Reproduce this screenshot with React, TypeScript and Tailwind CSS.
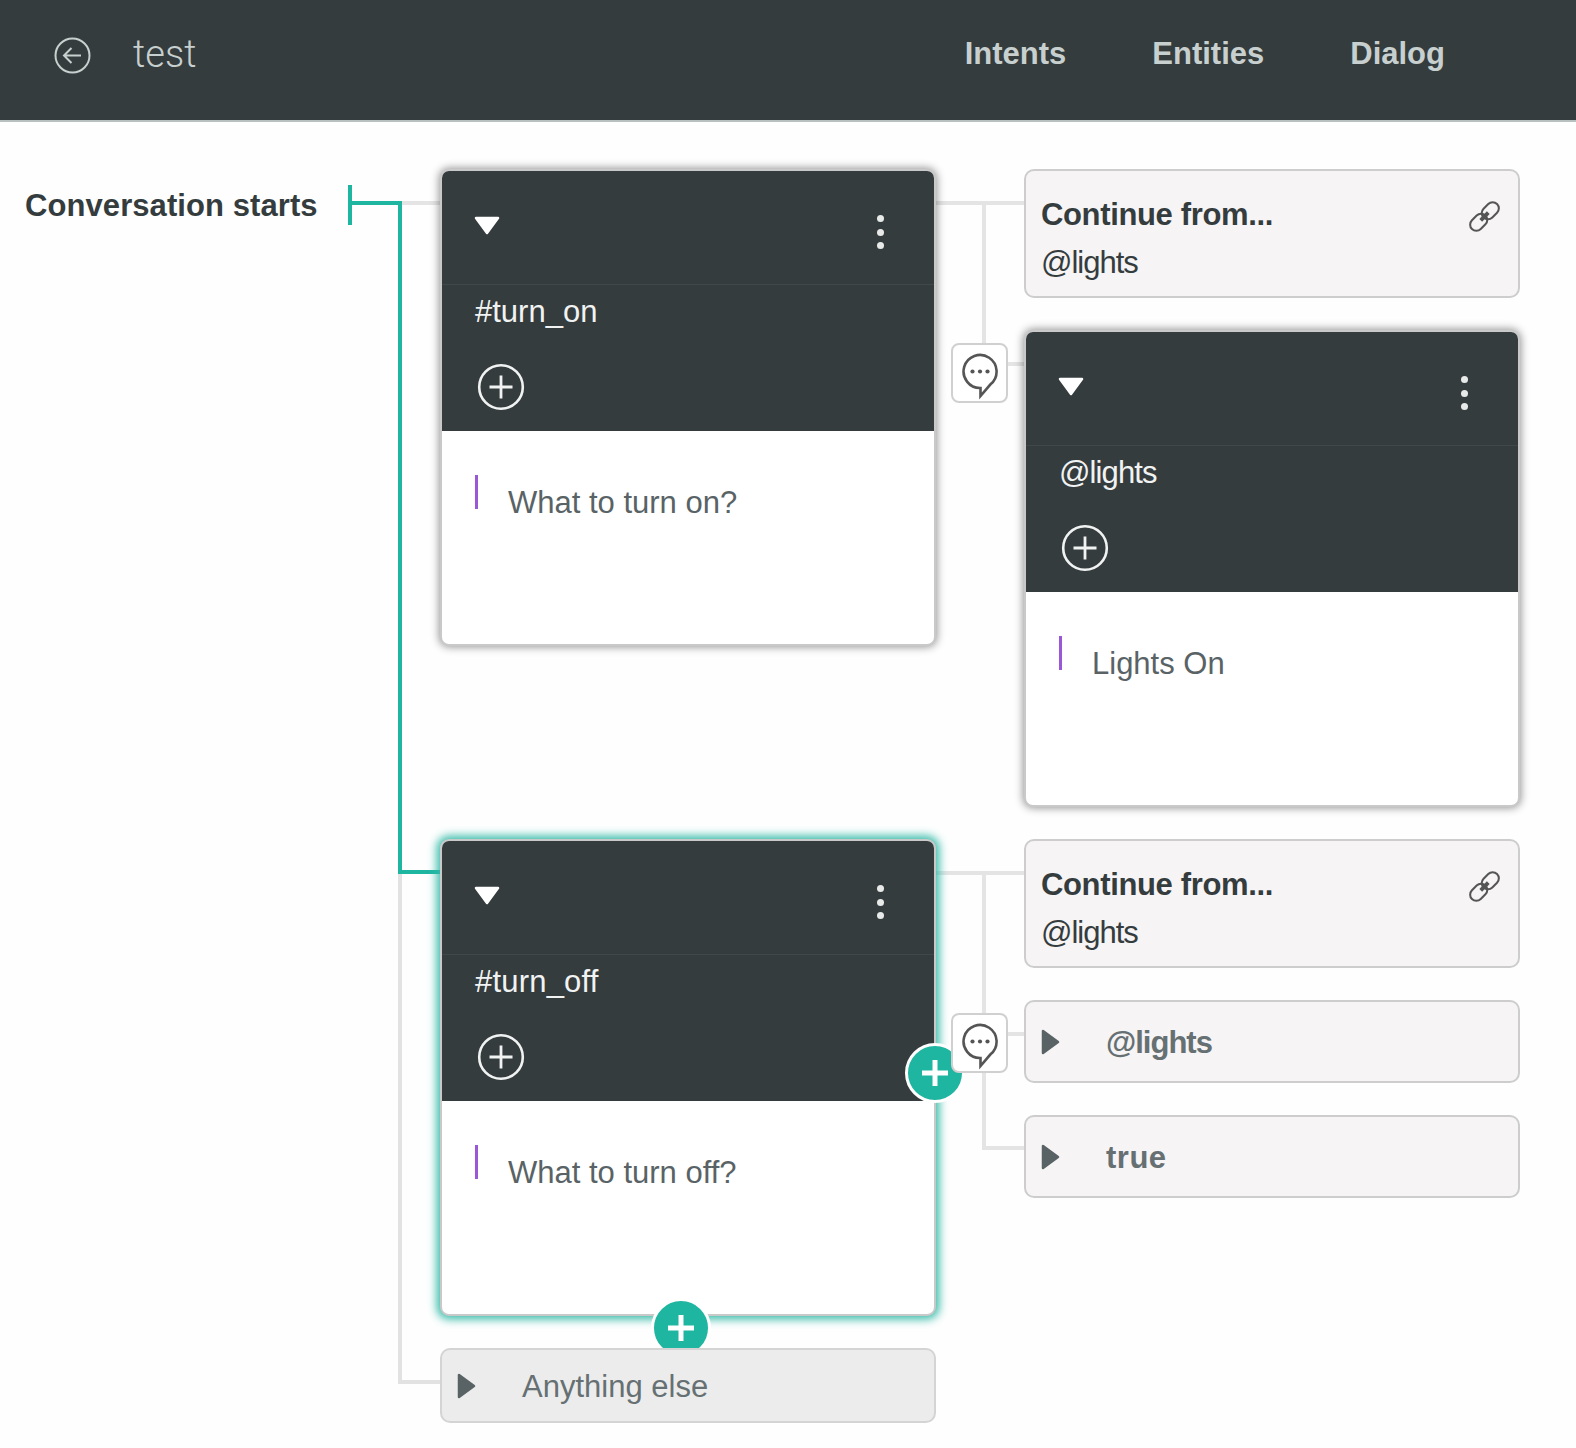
import React from "react";

const Line = ({ className }: { className: string }) => <div className={`absolute ${className}`} />;

const TriDown = () => (
  <svg width="26" height="19" viewBox="0 0 26 19">
    <path d="M2 2 H24 L13 17 Z" fill="#fff" stroke="#fff" strokeWidth="2.5" strokeLinejoin="round" />
  </svg>
);

const TriRight = () => (
  <svg width="19" height="26" viewBox="0 0 19 26" className="shrink-0">
    <path d="M2 2 V24 L17 13 Z" fill="#596366" stroke="#596366" strokeWidth="2.5" strokeLinejoin="round" />
  </svg>
);

const PlusCircle = () => (
  <svg width="48" height="48" viewBox="0 0 48 48">
    <circle cx="24" cy="24" r="21.8" fill="none" stroke="#f1f3f3" strokeWidth="2.6" />
    <path d="M24 12.5 V35.5 M12.5 24 H35.5" stroke="#f1f3f3" strokeWidth="2.8" />
  </svg>
);

const Card = ({
  title,
  text,
  selected,
  titleClass = "",
  className = "",
}: {
  title: string;
  text: string;
  selected?: boolean;
  titleClass?: string;
  className?: string;
}) => (
  <div
    className={`h-[477px] overflow-hidden rounded-[9px] border-2 border-[#c9c9c9] bg-white ${
      selected ? "shadow-[0_0_10px_3px_#2fb9a6]" : "shadow-[0_0_9px_1px_rgba(0,0,0,0.42)]"
    } ${className}`}
  >
    <div className="flex h-[260px] flex-col bg-[#353c3e]">
      <div className="flex h-[114px] items-start justify-between border-b border-[#41484a] pl-[32px] pr-[50px] pt-[45px]">
        <TriDown />
        <div className="-mt-px flex flex-col gap-[6.5px]">
          <span className="h-[7px] w-[7px] rounded-full bg-[#e8eaea]" />
          <span className="h-[7px] w-[7px] rounded-full bg-[#e8eaea]" />
          <span className="h-[7px] w-[7px] rounded-full bg-[#e8eaea]" />
        </div>
      </div>
      <div className={`pl-[33px] pt-[7px] text-[31px] leading-[40px] text-[#f1f3f3] ${titleClass}`}>{title}</div>
      <div className="pl-[35px] pt-[31px]">
        <PlusCircle />
      </div>
    </div>
    <div className="flex items-start pl-[33px] pt-[44px]">
      <span className="h-[34px] w-[3px] bg-[#9a58d6]" />
      <span className="ml-[30px] mt-[8px] text-[31px] leading-[40px] text-[#596366]">{text}</span>
    </div>
  </div>
);

const LinkIcon = () => (
  <svg width="39" height="39" viewBox="0 0 44 44" className="-mr-[3.5px] mt-[2px] shrink-0">
    <g fill="none" stroke="#555" strokeWidth="2.3" transform="rotate(-45 22 22)">
      <rect x="2" y="15" width="21.5" height="14" rx="7" />
      <rect x="20.5" y="15" width="21.5" height="14" rx="7" />
      <path d="M16 22 H28" strokeWidth="4.4" />
    </g>
  </svg>
);

const Continue = ({ className = "" }: { className?: string }) => (
  <div className={`h-[129px] rounded-[10px] border-2 border-[#cdcdcd] bg-[#f6f4f5] pl-[15px] pr-[18px] pt-[24px] ${className}`}>
    <div className="flex h-[40px] items-center justify-between">
      <span className="text-[31px] font-bold leading-[40px] tracking-[-0.35px] text-[#353c3e]">Continue from...</span>
      <LinkIcon />
    </div>
    <div className="mt-[8px] text-[31px] leading-[40px] tracking-[-1px] text-[#353c3e]">@lights</div>
  </div>
);

const Row = ({ label, className = "" }: { label: string; className?: string }) => (
  <div className={`flex h-[83px] items-center rounded-[10px] border-2 border-[#cdcdcd] bg-[#f6f4f5] pl-[15px] ${className}`}>
    <TriRight />
    <span className="ml-[46px] mt-[3px] text-[31px] font-bold leading-[40px] text-[#667073]">{label}</span>
  </div>
);

const Chat = ({ className }: { className: string }) => (
  <div className={`absolute z-20 flex h-[60px] w-[57px] items-start justify-center rounded-[8px] border-2 border-[#d0d0d0] bg-white pt-[8px] ${className}`}>
    <svg width="40" height="48" viewBox="0 0 40 48">
      <path
        d="M30.5 31.3 A16.5 16.5 0 1 0 20.5 35 V43 Z"
        fill="none"
        stroke="#555"
        strokeWidth="2.6"
        strokeLinejoin="miter"
      />
      <circle cx="12.5" cy="18.5" r="2.1" fill="#555" />
      <circle cx="20" cy="18.5" r="2.1" fill="#555" />
      <circle cx="27.5" cy="18.5" r="2.1" fill="#555" />
    </svg>
  </div>
);

const AddBtn = ({ className }: { className: string }) => (
  <div className={`absolute flex h-[60px] w-[60px] items-center justify-center rounded-full border-[3px] border-white bg-[#1eb5a1] ${className}`}>
    <svg width="26" height="26" viewBox="0 0 26 26">
      <path d="M13 0 V26 M0 13 H26" stroke="#fff" strokeWidth="5" />
    </svg>
  </div>
);

export default function App() {
  return (
    <div className="relative h-[1448px] w-[1576px] overflow-hidden bg-[#fefefe] font-['Liberation_Sans',Arial,sans-serif]">
      <header className="flex h-[122px] items-center border-b-2 border-[#b9c0c0] bg-[#353c3e] pb-[12px]">
        <svg width="37" height="37" viewBox="0 0 37 37" className="ml-[54px] mt-[2px]">
          <circle cx="18.5" cy="18.5" r="17" fill="none" stroke="#c7d0ce" strokeWidth="2" />
          <path d="M27 18.5 H10 M17.5 11 L10 18.5 L17.5 26" fill="none" stroke="#c7d0ce" strokeWidth="2" />
        </svg>
        <span className="ml-[42px] font-['Roboto',sans-serif] text-[38px] font-light leading-[44px] text-[#c7d0ce]">test</span>
        <nav className="ml-auto mr-[131px] flex gap-[86px] text-[31px] font-bold leading-[40px] text-[#c7d0ce]">
          <span>Intents</span>
          <span>Entities</span>
          <span>Dialog</span>
        </nav>
      </header>

      {/* connector lines of the tree */}
      <Line className="left-[348px] top-[185px] h-[40px] w-[4px] bg-[#1eb5a1]" />
      <Line className="left-[352px] top-[201px] h-[4px] w-[47px] bg-[#1eb5a1]" />
      <Line className="left-[401px] top-[201px] h-[4px] w-[40px] bg-[#e4e4e4]" />
      <Line className="left-[398px] top-[870px] h-[514px] w-[44px] border-b-4 border-l-4 border-[#e2e2e2]" />
      <Line className="left-[398px] top-[201px] h-[673px] w-[44px] rounded-none border-l-4 border-[#1eb5a1]" />
      <Line className="left-[402px] top-[870px] h-[4px] w-[40px] bg-[#1eb5a1]" />

      <Line className="left-[934px] top-[201px] h-[144px] w-[92px] bg-[linear-gradient(#e4e4e4,#e4e4e4),linear-gradient(#e4e4e4,#e4e4e4)] bg-[length:100%_4px,4px_100%] bg-[position:0_0,48px_0] bg-no-repeat" />
      <Line className="left-[1006px] top-[362px] h-[4px] w-[20px] bg-[#e4e4e4]" />
      <Line className="left-[934px] top-[871px] h-[4px] w-[92px] bg-[#e4e4e4]" />
      <Line className="left-[982px] top-[871px] h-[279px] w-[44px] border-b-4 border-l-4 border-[#e4e4e4]" />
      <Line className="left-[1006px] top-[1032px] h-[4px] w-[20px] bg-[#e4e4e4]" />

      <main className="relative flex">
        <div className="w-[440px] pl-[25px] pt-[64px] text-[31px] font-bold leading-[40px] tracking-[0.08px] text-[#353c3e]">
          Conversation starts
        </div>
        <div className="w-[496px] pt-[47px]">
          <Card title="#turn_on" text="What to turn on?" />
          <div className="relative mt-[193px]">
            <Card title="#turn_off" titleClass="tracking-[0.2px]" text="What to turn off?" selected />
            <AddBtn className="left-[211px] top-[459px]" />
          </div>
          <div className="relative z-10 mt-[32px] flex h-[75px] items-center rounded-[10px] border-2 border-[#d4d4d4] bg-[#ececec] pl-[15px]">
            <TriRight />
            <span className="ml-[46px] mt-[3px] text-[31px] leading-[40px] text-[#667073]">Anything else</span>
          </div>
        </div>
        <div className="ml-[88px] flex w-[496px] flex-col pt-[47px]">
          <Continue />
          <Card title="@lights" titleClass="tracking-[-0.9px]" text="Lights On" className="mt-[32px]" />
          <Continue className="mt-[32px]" />
          <Row label="@lights" className="mt-[32px] tracking-[-1px]" />
          <Row label="true" className="mt-[32px] tracking-[0.5px]" />
        </div>
      </main>

      <AddBtn className="left-[905px] top-[1043px] z-10" />
      <Chat className="left-[951px] top-[343px]" />
      <Chat className="left-[951px] top-[1013px]" />
    </div>
  );
}
